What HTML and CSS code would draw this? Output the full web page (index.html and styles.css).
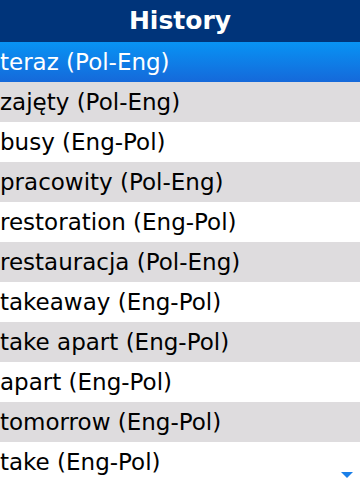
FILE: index.html
```html
<!DOCTYPE html>
<html lang="pl">
<head>
  <meta charset="UTF-8">
  <title>History</title>
  <link rel="stylesheet" href="styles.css">
</head>
<body>
  <header class="titlebar">History</header>
  <ul class="history">
    <li class="selected">teraz (Pol-Eng)</li>
    <li class="alt">zajęty (Pol-Eng)</li>
    <li>busy (Eng-Pol)</li>
    <li class="alt">pracowity (Pol-Eng)</li>
    <li>restoration (Eng-Pol)</li>
    <li class="alt">restauracja (Pol-Eng)</li>
    <li>takeaway (Eng-Pol)</li>
    <li class="alt">take apart (Eng-Pol)</li>
    <li>apart (Eng-Pol)</li>
    <li class="alt">tomorrow (Eng-Pol)</li>
    <li>take (Eng-Pol)</li>
  </ul>
  <span class="more"></span>
</body>
</html>
```

FILE: styles.css
```css
body {
  margin: 0;
  width: 360px;
  height: 480px;
  overflow: hidden;
  position: relative;
  font-family: 'DejaVu Sans', sans-serif;
  background: #ffffff;
}

.titlebar {
  height: 42px;
  line-height: 42px;
  background: #00347a;
  color: #ffffff;
  font-size: 25px;
  font-weight: bold;
  text-align: center;
}

.history {
  list-style: none;
  margin: 0;
  padding: 0;
}

.history li {
  height: 40px;
  line-height: 40px;
  font-size: 23px;
  color: #000000;
  padding-left: 0;
  white-space: nowrap;
}

.history li.alt {
  background: #dedcde;
}

.history li.selected {
  background: linear-gradient(#0893f4, #1569da);
  color: #ffffff;
}

.more {
  position: absolute;
  right: 7px;
  bottom: 2px;
  width: 0;
  height: 0;
  border-left: 6px solid transparent;
  border-right: 6px solid transparent;
  border-top: 6px solid #1a7fe8;
}
```
